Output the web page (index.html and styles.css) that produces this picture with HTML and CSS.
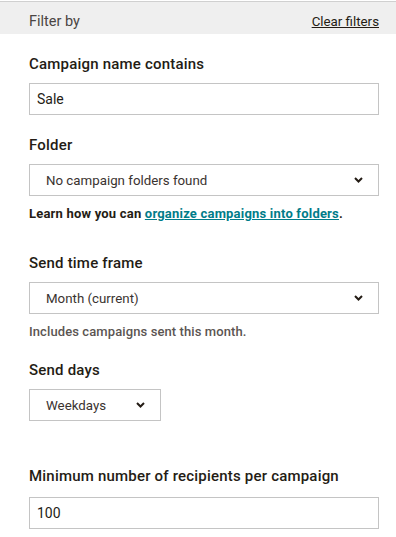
FILE: index.html
```html
<!DOCTYPE html>
<html>
<head>
<meta charset="utf-8">
<link rel="stylesheet" href="styles.css">
</head>
<body>
<div class="panel">
  <div class="header">
    <span class="title">Filter by</span>
    <a class="clear" href="#">Clear filters</a>
  </div>
  <div class="body">
    <div class="field f-name">
      <label class="label">Campaign name contains</label>
      <div class="input">Sale</div>
    </div>
    <div class="field f-folder">
      <label class="label">Folder</label>
      <div class="select"><span>No campaign folders found</span><svg class="chev" width="9" height="6" viewBox="0 0 9 6"><path d="M1 1 L4.5 4.5 L8 1" fill="none" stroke="#241c15" stroke-width="2"/></svg></div>
      <p class="help strong">Learn how you can <a href="#">organize campaigns into folders</a>.</p>
    </div>
    <div class="field f-time">
      <label class="label">Send time frame</label>
      <div class="select"><span>Month (current)</span><svg class="chev" width="9" height="6" viewBox="0 0 9 6"><path d="M1 1 L4.5 4.5 L8 1" fill="none" stroke="#241c15" stroke-width="2"/></svg></div>
      <p class="help">Includes campaigns sent this month.</p>
    </div>
    <div class="field f-days">
      <label class="label">Send days</label>
      <div class="select small"><span>Weekdays</span><svg class="chev" width="9" height="6" viewBox="0 0 9 6"><path d="M1 1 L4.5 4.5 L8 1" fill="none" stroke="#241c15" stroke-width="2"/></svg></div>
    </div>
    <div class="field f-min">
      <label class="label">Minimum number of recipients per campaign</label>
      <div class="input">100</div>
    </div>
  </div>
</div>
</body>
</html>
```

FILE: styles.css
```css
html, body {
  margin: 0;
  padding: 0;
  background: #ffffff;
}
body {
  font-family: Roboto, "Liberation Sans", sans-serif;
  color: #241c15;
}
.panel {
  margin-top: 1px;
  border-top: 1px solid #d0d0d0;
}
.header {
  height: 32px;
  background: #efefef;
  display: flex;
  align-items: center;
  justify-content: space-between;
  padding: 6px 17px 0 29px;
  box-sizing: border-box;
}
.title {
  font-size: 14.5px;
  color: #4a4543;
}
.clear {
  font-size: 13.3px;
  color: #241c15;
  text-decoration: underline;
}
.body {
  padding: 20px 17px 0 29px;
}
.field {
  display: flex;
  flex-direction: column;
}
.label {
  font-size: 15px;
  font-weight: 500;
  line-height: 21px;
  letter-spacing: 0.2px;
  margin-bottom: 8px;
  color: #241c15;
}
.input, .select {
  height: 32px;
  box-sizing: border-box;
  border: 1px solid #c4c4c4;
  display: flex;
  align-items: center;
  color: #241c15;
}
.input {
  padding-left: 7px;
  font-size: 14px;
}
.select {
  padding: 0 15px 0 16px;
  justify-content: space-between;
  font-size: 13.3px;
  color: #3a3330;
}
.select.small {
  width: 132px;
}
.chev {
  display: block;
}
.help {
  margin: 9px 0 0 0;
  font-size: 13px;
  line-height: 18px;
  letter-spacing: 0.1px;
  color: #5b5552;
  font-weight: 500;
}
.help.strong {
  color: #241c15;
  font-weight: 700;
  letter-spacing: 0.2px;
}
.help a {
  color: #007c89;
  text-decoration: underline;
}
.f-folder { margin-top: 20px; }
.f-time { margin-top: 30px; }
.f-days { margin-top: 19px; }
.f-min { margin-top: 45px; }
.f-min .label { margin-bottom: 10px; }
```
